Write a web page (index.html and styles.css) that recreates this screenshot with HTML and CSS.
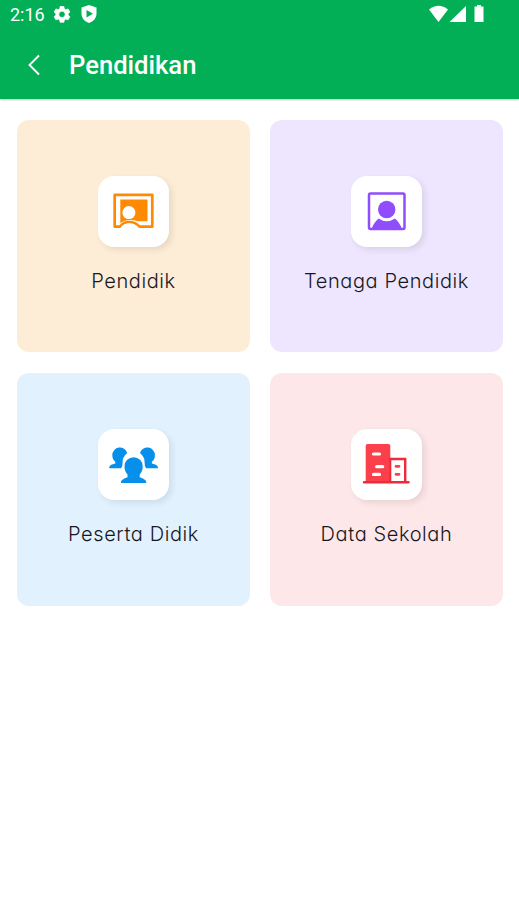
FILE: index.html
```
<!DOCTYPE html>
<html lang="id">
<head>
  <meta charset="UTF-8">
  <title>Pendidikan</title>
  <link rel="stylesheet" href="styles.css">
</head>
<body>

<header>
  <div class="status">
    <span class="time">2:16</span>
    <svg class="gear" width="18" height="18" viewBox="0 0 24 24">
      <path fill="#fff" stroke="#fff" stroke-linejoin="round" fill-rule="evenodd" d="M9.5 2h5l.6 3 2 1.2 3-1 2.4 4.2-2.3 2v2.2l2.300 2-2.400 4.200-3-1-2 1.200-.6 3h-5l-.6-3-2-1.200-3 1-2.400-4.200 2.300-2v-2.200l-2.300-2 2.400-4.200 3 1 2-1.200zM12 8.200a4.300 4.300 0 1 0 0 8.600 4.300 4.300 0 0 0 0-8.600z"/>
    </svg>
    <svg class="shield" width="16" height="18" viewBox="0 0 16 18">
      <path fill="#fff" fill-rule="evenodd" d="M8 0l7.500 2.500v6c0 4.500-3 8-7.500 9.500-4.500-1.500-7.500-5-7.500-9.500v-6zM5.500 5v7.500l6.500-3.700z"/>
    </svg>
    <svg class="signals" width="56" height="18" viewBox="0 0 56 18">
      <path fill="#fff" d="M0 4.500Q9.500-3 19 4.500L9.500 17z"/>
      <path fill="#fff" d="M37 1v16H20.500z"/>
      <path fill="#fff" d="M48 0h4v1.500h2.500V17h-9V1.500H48z"/>
    </svg>
  </div>
  <div class="bar">
    <svg width="14" height="22" viewBox="0 0 14 22">
      <path fill="none" stroke="#fff" stroke-width="1.900" d="M12 1.500L2.500 11l9.500 9.500"/>
    </svg>
    <h1>Pendidikan</h1>
  </div>
</header>

<div class="menu">
  <div class="tile orange">
    <div class="icon">
      <svg width="71" height="71" viewBox="0 0 71 71">
        <path fill="#fe8a04" d="M22.300 23.500H49.500v21.700H40Q36 44 31.300 44T22.300 47z"/>
        <path fill="none" stroke="#fe8a04" stroke-width="2.700" stroke-linejoin="round" d="M22 50.700h-5.300V18.900H54.300v31.800H41.500Q37.500 46 31.300 46T22 50.700z"/>
        <path fill="#fff" d="M23.500 50.500Q26.500 47.400 31.300 47.400T39.500 50.500l1.500 2.500H22z"/>
        <circle fill="#fff" cx="30.900" cy="36.600" r="6.500"/>
      </svg>
    </div>
    <p>Pendidik</p>
  </div>

  <div class="tile purple">
    <div class="icon">
      <svg width="71" height="71" viewBox="0 0 71 71">
        <rect fill="none" stroke="#8f4dfc" stroke-width="2.500" x="18" y="17.600" width="35.500" height="35.400" rx="1.500"/>
        <circle fill="#8f4dfc" cx="35.700" cy="33.500" r="8.700"/>
        <path fill="#8f4dfc" d="M20.500 53Q22.500 47 27.500 42.500Q35.700 48 44 42.500Q49 47 51 53z"/>
      </svg>
    </div>
    <p>Tenaga Pendidik</p>
  </div>

  <div class="tile blue">
    <div class="icon">
      <svg width="71" height="71" viewBox="0 0 71 71">
        <g fill="#078fec">
          <path id="back" d="M11.300 39.300v-1.300q.3-2.200 6-3.500v-1.800q-3-2.500-3-6.500a7.600 7.600 0 0 1 14.900-2.200q-5 4-4.700 10.500.3 2.500-1.500 4.800z"/>
          <use href="#back" transform="matrix(-1 0 0 1 71.200 0)"/>
          <path d="M23 54v-1.300q.3-2.500 6.500-4.500v-2.700q-3-3-3-8.200a9.100 9.100 0 0 1 18.200 0q0 5.200-3 8.200v2.700q6.200 2 6.500 4.500V54z"/>
        </g>
      </svg>
    </div>
    <p>Peserta Didik</p>
  </div>

  <div class="tile red">
    <div class="icon">
      <svg width="71" height="71" viewBox="0 0 71 71">
        <path fill="#fb3f4b" d="M14.700 53V17q0-2 2-2h20.600q2 0 2 2v36z"/>
        <path fill="none" stroke="#ee2b3a" stroke-width="2.400" stroke-linecap="round" d="M39 30h15.200v23M13 53.200h44.500"/>
        <path fill="none" stroke="#ee2b3a" stroke-width="2" d="M39.300 30v23"/>
        <path stroke="#fff" stroke-width="3.200" stroke-linecap="round" d="M22.500 25h6M25.700 37.700h6M22.500 45.400h6"/>
        <path stroke="#fb3f4b" stroke-width="2.800" stroke-linecap="round" d="M45 37.300h3M45 45.300h3"/>
      </svg>
    </div>
    <p>Data Sekolah</p>
  </div>
</div>

</body>
</html>
```
FILE: styles.css
```
body {
  margin: 0;
  background-color: white;
}
header {
  height: 99px;
  background-color: #02af57;
  color: white;
  font-family: Roboto, sans-serif;
  box-shadow: 0 1px 2px rgba(0, 0, 0, 0.25);
}
.status {
  display: flex;
  align-items: center;
  height: 28px;
  padding: 0 34px 0 10px;
}
.time {
  width: 43px;
  font-size: 18px;
}
.shield {
  margin-left: 10px;
}
.signals {
  margin-left: auto;
}
.bar {
  display: flex;
  align-items: center;
  height: 74px;
  padding-left: 27px;
}
h1 {
  margin: 0 0 0 28px;
  font-size: 25.6px;
  font-weight: 500;
}
.menu {
  display: grid;
  grid-template-columns: 233px 233px;
  gap: 21px 20px;
  padding: 21px 16px 0 17px;
}
.tile {
  display: flex;
  flex-direction: column;
  align-items: center;
  height: 232px;
  border-radius: 12px;
}
.orange {
  background-color: #feedd6;
}
.purple {
  background-color: #eee6fe;
}
.blue {
  height: 233px;
  background-color: #e1f2fe;
}
.red {
  height: 233px;
  background-color: #fee7e9;
}
.icon {
  width: 71px;
  height: 71px;
  margin-top: 56px;
  border-radius: 16px;
  background-color: white;
  box-shadow: 3px 3px 6px rgba(0, 0, 0, 0.09);
}
.tile p {
  margin: 19px 0 0;
  font-family: Inter, sans-serif;
  font-feature-settings: "cv11";
  font-size: 20px;
  font-weight: 300;
  letter-spacing: 0.6px;
  line-height: 31px;
  color: #17171f;
}
```
